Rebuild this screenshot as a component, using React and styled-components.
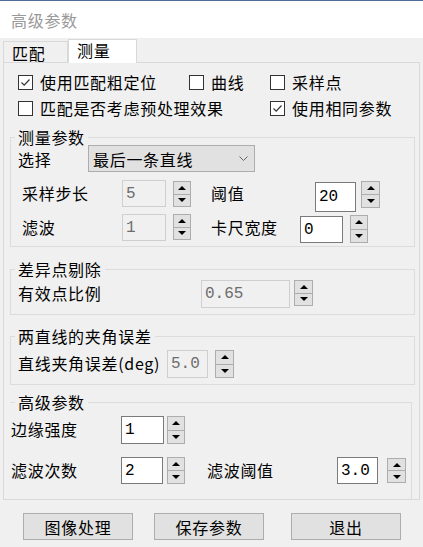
import React from 'react'
import styled, { createGlobalStyle } from 'styled-components'

const GlobalStyle = createGlobalStyle`
  html, body {
    margin: 0;
    padding: 0;
    background: #f0f0f0;
  }
  body {
    font-family: "Noto Sans CJK SC", "Noto Sans", sans-serif;
    font-size: 16px;
    color: #000;
  }
`

const Window = styled.div`
  width: 423px;
  height: 547px;
  box-sizing: border-box;
  background: #f0f0f0;
  border-top: 1px solid #4f6d94;
  overflow: hidden;
`

const TitleBar = styled.div`
  height: 37px;
  background: #fff;
  display: flex;
  align-items: center;
  padding-left: 11px;
  color: #999;
  letter-spacing: 0.7px;
`

const TabStrip = styled.div`
  display: flex;
  align-items: flex-end;
  height: 24px;
  padding-left: 3px;
  position: relative;
  z-index: 1;
`

const Tab = styled.div`
  box-sizing: border-box;
  height: ${p => (p.$active ? 24 : 21)}px;
  width: ${p => (p.$active ? 69 : 65)}px;
  margin-bottom: ${p => (p.$active ? -1 : 0)}px;
  padding-left: 8px;
  line-height: ${p => (p.$active ? 21 : 23)}px;
  border: 1px solid #d9d9d9;
  border-bottom: none;
  background: ${p => (p.$active ? '#fff' : '#f0f0f0')};
  letter-spacing: 0.7px;
`

const Panel = styled.div`
  box-sizing: border-box;
  margin-left: 3px;
  width: 417px;
  height: 438px;
  border: 1px solid #d9d9d9;
  padding-top: 6px;
  overflow: hidden;
`

const CheckGrid = styled.div`
  display: grid;
  grid-template-columns: 171px 81px auto;
  grid-auto-rows: 26px;
  padding-left: 14px;
`

const CheckItem = styled.label`
  display: flex;
  align-items: center;
  gap: 7px;
  grid-column: ${p => p.$span || 'auto'};
  letter-spacing: 0.7px;
  white-space: nowrap;
`

const Box = styled.span`
  flex: none;
  box-sizing: border-box;
  width: 15px;
  height: 15px;
  border: 1px solid #333;
  background: #fff;
  display: flex;
  align-items: center;
  justify-content: center;
`

const Group = styled.div`
  box-sizing: border-box;
  margin: ${p => p.$mt}px 0 0 6px;
  width: ${p => p.$w || 405}px;
  border: 1px solid #dcdcdc;
  border-left-color: ${p => (p.$open ? 'transparent' : '#dcdcdc')};
  padding-bottom: ${p => p.$pb || 0}px;
`

const GroupTitle = styled.div`
  display: table;
  margin: -9px 0 0 4px;
  padding: 0 3px;
  line-height: 16px;
  background: #f0f0f0;
  letter-spacing: 0.7px;
`

const Row = styled.div`
  display: flex;
  align-items: flex-start;
  height: ${p => p.$h || 27}px;
  margin-top: ${p => p.$mt || 0}px;
  margin-left: ${p => p.$ml || 0}px;
`

const Label = styled.span`
  flex: none;
  width: ${p => p.$w}px;
  margin-left: ${p => p.$ml || 0}px;
  height: ${p => p.$lh || 27}px;
  line-height: ${p => p.$lh || 27}px;
  letter-spacing: 0.7px;
  white-space: nowrap;
`

const NumBox = styled.div`
  flex: none;
  box-sizing: border-box;
  width: ${p => p.$w}px;
  height: ${p => p.$h || 27}px;
  margin-left: ${p => p.$ml || 0}px;
  margin-top: ${p => p.$mt || 0}px;
  border: 1px solid ${p => (p.$off ? '#cfcfcf' : '#7a7a7a')};
  background: ${p => (p.$off ? '#f0f0f0' : '#fff')};
  color: ${p => (p.$off ? '#6d6d6d' : '#000')};
  font-family: "Liberation Mono", "DejaVu Sans Mono", monospace;
  font-size: 16px;
  padding-left: 3px;
  display: flex;
  align-items: center;
`

const Spin = styled.div`
  flex: none;
  box-sizing: border-box;
  display: flex;
  flex-direction: column;
  width: ${p => p.$w || 18}px;
  height: ${p => p.$h || 26}px;
  margin-left: ${p => p.$ml || 0}px;
  margin-top: ${p => p.$mt || 0}px;
  border: 1px solid #adadad;
  background: #e1e1e1;
`

const SpinHalf = styled.div`
  flex: 1;
  display: flex;
  align-items: center;
  justify-content: center;
  & + & {
    border-top: 1px solid #adadad;
  }
`

const Arrow = styled.span`
  width: 0;
  height: 0;
  border-left: 4px solid transparent;
  border-right: 4px solid transparent;
  ${p => (p.$down ? 'border-top: 4px solid #000;' : 'border-bottom: 4px solid #000;')}
`

const Combo = styled.div`
  flex: none;
  box-sizing: border-box;
  width: 167px;
  height: 27px;
  border: 1px solid #adadad;
  background: #e1e1e1;
  display: flex;
  align-items: center;
  justify-content: space-between;
  padding: 0 6px 0 4px;
  letter-spacing: 0.7px;
`

const ButtonBar = styled.div`
  display: flex;
  margin-top: 13px;
  padding-left: 23px;
`

const Btn = styled.button`
  box-sizing: border-box;
  width: 110px;
  height: 27px;
  margin-left: ${p => p.$ml || 0}px;
  border: 1px solid #adadad;
  background: #e1e1e1;
  font-family: inherit;
  font-size: 16px;
  letter-spacing: 0.7px;
  color: #000;
  padding: 0;
`

const Check = ({ on }) => (
  <Box>
    {on && (
      <svg width="11" height="11" viewBox="0 0 11 11">
        <polyline points="1.5,5.5 4.2,8.2 9.5,2.5" fill="none" stroke="#333" strokeWidth="1.2" />
      </svg>
    )}
  </Box>
)

const Spinner = props => (
  <Spin {...props}>
    <SpinHalf><Arrow /></SpinHalf>
    <SpinHalf><Arrow $down /></SpinHalf>
  </Spin>
)

const Chevron = () => (
  <svg width="9" height="5" viewBox="0 0 9 5">
    <polyline points="0.5,0.5 4.5,4.5 8.5,0.5" fill="none" stroke="#666" strokeWidth="1" />
  </svg>
)

export default function App() {
  return (
    <>
      <GlobalStyle />
      <Window>
        <TitleBar>高级参数</TitleBar>
        <TabStrip>
          <Tab>匹配</Tab>
          <Tab $active>测量</Tab>
        </TabStrip>
        <Panel>
          <CheckGrid>
            <CheckItem><Check on />使用匹配粗定位</CheckItem>
            <CheckItem><Check />曲线</CheckItem>
            <CheckItem><Check />采样点</CheckItem>
            <CheckItem $span="1 / 3"><Check />匹配是否考虑预处理效果</CheckItem>
            <CheckItem><Check on />使用相同参数</CheckItem>
          </CheckGrid>

          <Group $mt={16} $pb={3}>
            <GroupTitle>测量参数</GroupTitle>
            <Row $mt={0} $ml={7}>
              <Label $w={70} $lh={29}>选择</Label>
              <Combo>最后一条直线<Chevron /></Combo>
            </Row>
            <Row $mt={8} $ml={11} $h={27}>
              <Label $w={100}>采样步长</Label>
              <NumBox $w={44} $off>5</NumBox>
              <Spinner $ml={7} $mt={1} />
              <Label $w={104} $ml={20}>阈值</Label>
              <NumBox $w={41} $h={30} $mt={2}>20</NumBox>
              <Spinner $ml={5} $w={19} $h={27} $mt={1} />
            </Row>
            <Row $mt={7} $ml={11} $h={29}>
              <Label $w={100}>滤波</Label>
              <NumBox $w={44} $off>1</NumBox>
              <Spinner $ml={7} />
              <Label $w={89} $ml={20}>卡尺宽度</Label>
              <NumBox $w={43} $mt={2}>0</NumBox>
              <Spinner $ml={7} $h={28} $mt={1} />
            </Row>
          </Group>

          <Group $mt={22} $pb={6}>
            <GroupTitle>差异点剔除</GroupTitle>
            <Row $mt={3} $ml={7} $h={28}>
              <Label $w={183}>有效点比例</Label>
              <NumBox $w={89} $h={28} $off>0.65</NumBox>
              <Spinner $ml={4} $w={19} />
            </Row>
          </Group>

          <Group $mt={21} $pb={6}>
            <GroupTitle>两直线的夹角误差</GroupTitle>
            <Row $mt={6} $ml={7} $h={28}>
              <Label $w={149}>直线夹角误差(deg)</Label>
              <NumBox $w={41} $h={28} $off>5.0</NumBox>
              <Spinner $ml={7} $w={19} $h={28} />
            </Row>
          </Group>

          <Group $mt={17} $w={402} $pb={40} $open>
            <GroupTitle>高级参数</GroupTitle>
            <Row $mt={6} $h={28}>
              <Label $w={110}>边缘强度</Label>
              <NumBox $w={43} $h={28}>1</NumBox>
              <Spinner $ml={3} $h={28} />
            </Row>
            <Row $mt={13} $h={27}>
              <Label $w={110}>滤波次数</Label>
              <NumBox $w={42}>2</NumBox>
              <Spinner $ml={4} $h={27} />
              <Label $w={130} $ml={22}>滤波阈值</Label>
              <NumBox $w={41}>3.0</NumBox>
              <Spinner $ml={9} $w={19} $h={25} $mt={1} />
            </Row>
          </Group>
        </Panel>
        <ButtonBar>
          <Btn>图像处理</Btn>
          <Btn $ml={21}>保存参数</Btn>
          <Btn $ml={27}>退出</Btn>
        </ButtonBar>
      </Window>
    </>
  )
}
